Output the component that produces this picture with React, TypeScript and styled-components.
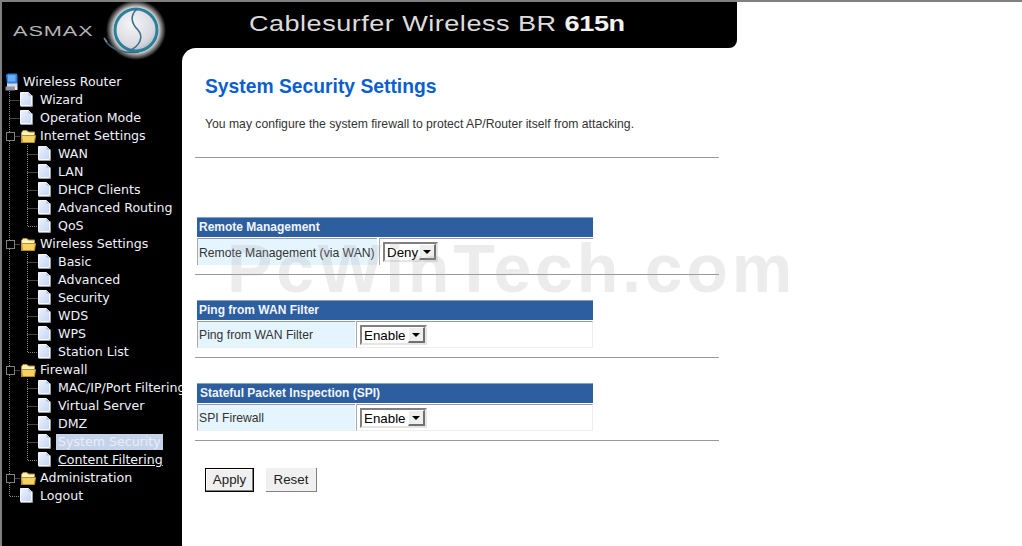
import React from "react";
import styled, { createGlobalStyle } from "styled-components";

const GlobalStyle = createGlobalStyle`
    html, body {
        margin: 0;
        padding: 0;
        background: #fff;
        overflow: hidden;
    }
`;

type Link = "line" | "join" | "last" | "plus" | "blank";
type Glyph = "page" | "folder";

interface TreeNode {
    label: string;
    glyph: Glyph;
    links: Link[];
    active?: boolean;
    underlined?: boolean;
}

const child = (label: string, last = false, extra = {}): TreeNode => ({
    label,
    glyph: "page",
    links: ["line", last ? "last" : "join"],
    ...extra,
});

const nodes: TreeNode[] = [
    { label: "Wizard", glyph: "page", links: ["join"] },
    { label: "Operation Mode", glyph: "page", links: ["join"] },
    { label: "Internet Settings", glyph: "folder", links: ["plus"] },
    child("WAN"),
    child("LAN"),
    child("DHCP Clients"),
    child("Advanced Routing"),
    child("QoS", true),
    { label: "Wireless Settings", glyph: "folder", links: ["plus"] },
    child("Basic"),
    child("Advanced"),
    child("Security"),
    child("WDS"),
    child("WPS"),
    child("Station List", true),
    { label: "Firewall", glyph: "folder", links: ["plus"] },
    child("MAC/IP/Port Filtering"),
    child("Virtual Server"),
    child("DMZ"),
    child("System Security", false, { active: true }),
    child("Content Filtering", true, { underlined: true }),
    { label: "Administration", glyph: "folder", links: ["plus"] },
    { label: "Logout", glyph: "page", links: ["last"] },
];

const LinkIcon: React.FC<{ kind: Link }> = ({ kind }) => (
    <svg width="18" height="18" viewBox="0 0 18 18" style={{ flex: "none" }}>
        {kind !== "blank" && (
            <path
                d={
                    kind === "last"
                        ? "M7.5 0V9.5H18"
                        : kind === "line"
                          ? "M7.5 0V18"
                          : "M7.5 0V18M7.5 9.5H18"
                }
                fill="none"
                stroke="#8a8a8a"
                strokeDasharray="1 1"
            />
        )}
        {kind === "plus" && <rect x="4.5" y="5.5" width="8" height="8" fill="#000" stroke="#808080" />}
    </svg>
);

const PageIcon = () => (
    <svg width="18" height="18" viewBox="0 0 18 18" style={{ flex: "none" }}>
        <defs>
            <linearGradient id="sheet" x1="0" y1="0" x2="1" y2="1">
                <stop offset="0" stopColor="#eef3ff" />
                <stop offset="1" stopColor="#c4d4f2" />
            </linearGradient>
        </defs>
        <path d="M0.5 1.5H8.5L11.5 4.5V14.5H0.5z" fill="url(#sheet)" stroke="#f6f8ff" />
        <path d="M8.5 1.5V4.5H11.5" fill="#aebbd6" />
        <path d="M12.5 4.5V15.5H0.5" fill="none" stroke="#9a9a9a" />
    </svg>
);

const FolderIcon = () => (
    <svg width="18" height="18" viewBox="0 0 18 18" style={{ flex: "none" }}>
        <path d="M1.5 16V5.5L3 3.5H7L8.5 5H14.5V7" fill="#fff0b0" stroke="#b88f20" />
        <path d="M2.5 6.5H14.5V8H2.5z" fill="#fff8dc" />
        <path d="M1.5 8.5H15.5L14.5 15.5H2.5z" fill="#f6d263" stroke="#b88f20" />
    </svg>
);

const ServerIcon = () => (
    <svg width="14" height="18" viewBox="0 0 14 18" style={{ flex: "none" }}>
        <path d="M1 2L3 0.5H11.5L12.5 2V11H2z" fill="#2f7fe6" />
        <path d="M3 2H10.5V8.5H3z" fill="#67aef5" />
        <path d="M2 10.5H12.5V14H2z" fill="#d7dae2" />
        <path d="M0.5 13.5H9.5V17.5H0.5z" fill="#8d93a3" />
        <path d="M9.5 14H12.5V17H9.5z" fill="#e9ecf2" />
    </svg>
);

const BrandMark = () => (
    <svg width="76" height="66" viewBox="0 0 76 66">
        <defs>
            <radialGradient id="halo">
                <stop offset="0.72" stopColor="#f4f4f4" />
                <stop offset="0.84" stopColor="#8a8a8a" />
                <stop offset="1" stopColor="#000" />
            </radialGradient>
            <radialGradient id="pearl" cx="0.4" cy="0.35" r="0.75">
                <stop offset="0" stopColor="#f6f6f8" />
                <stop offset="0.7" stopColor="#d8d9de" />
                <stop offset="1" stopColor="#a9adb5" />
            </radialGradient>
        </defs>
        <circle cx="41" cy="30" r="30" fill="url(#halo)" />
        <path d="M10 40C16 50 30 54 44 52" fill="none" stroke="#3b6274" strokeWidth="1.5" />
        <path d="M9 38L12 42" stroke="#7a8a9a" strokeWidth="1.5" />
        <circle cx="41" cy="30" r="21" fill="url(#pearl)" stroke="#2a7f9b" strokeWidth="3" />
        <path d="M42 9C34 16 37 24 43 30C49 37 45 46 34 51" fill="none" stroke="#3d6f8d" strokeWidth="1.6" />
    </svg>
);

const sections = [
    {
        title: "Remote Management",
        label: "Remote Management (via WAN)",
        value: "Deny",
        labelWidth: 180,
        selectWidth: 55,
        open: true,
        titleInset: 2,
    },
    {
        title: "Ping from WAN Filter",
        label: "Ping from WAN Filter",
        value: "Enable",
        labelWidth: 158,
        selectWidth: 67,
        titleInset: 2,
    },
    {
        title: "Stateful Packet Inspection (SPI)",
        label: "SPI Firewall",
        value: "Enable",
        labelWidth: 158,
        selectWidth: 67,
        titleInset: 3,
    },
];

export default function App() {
    return (
        <Page>
            <GlobalStyle />
            <Header>
                <Brand>ASMAX</Brand>
                <BrandLogo>
                    <BrandMark />
                </BrandLogo>
                <ProductName>
                    Cablesurfer Wireless BR <b>615n</b>
                </ProductName>
            </Header>
            <Body>
                <Sidebar>
                    <RootRow>
                        <ServerIcon />
                        <RootLabel>Wireless Router</RootLabel>
                    </RootRow>
                    {nodes.map(node => (
                        <Row key={node.label}>
                            {node.links.map((link, i) => (
                                <LinkIcon key={i} kind={link} />
                            ))}
                            {node.glyph === "page" ? <PageIcon /> : <FolderIcon />}
                            <NodeLabel $active={node.active} $underlined={node.underlined}>
                                {node.label}
                            </NodeLabel>
                        </Row>
                    ))}
                </Sidebar>
                <MainBack>
                    <Main>
                        <Title>System Security Settings</Title>
                        <Intro>You may configure the system firewall to protect AP/Router itself from attacking.</Intro>
                        <Rule />
                        <Sections>
                            {sections.map(section => (
                                <Section key={section.title}>
                                    <SectionTitle $inset={section.titleInset}>{section.title}</SectionTitle>
                                    <SectionRow>
                                        <FieldLabel $width={section.labelWidth} $open={section.open}>
                                            {section.label}
                                        </FieldLabel>
                                        <FieldValue $open={section.open}>
                                            <FakeSelect $width={section.selectWidth}>
                                                <span>{section.value}</span>
                                                <SelectArrow />
                                            </FakeSelect>
                                        </FieldValue>
                                    </SectionRow>
                                    <SectionRule />
                                </Section>
                            ))}
                        </Sections>
                        <Actions>
                            <ApplyButton>Apply</ApplyButton>
                            <ResetButton>Reset</ResetButton>
                        </Actions>
                        <Watermark>PcWinTech.com</Watermark>
                    </Main>
                </MainBack>
            </Body>
        </Page>
    );
}

const Page = styled.div`
    width: 1022px;
    height: 546px;
    box-sizing: border-box;
    border-top: 2px solid #808080;
    display: flex;
    flex-direction: column;
    background: #fff;
    overflow: hidden;
`;

const Header = styled.header`
    width: 737px;
    height: 46px;
    flex: none;
    box-sizing: border-box;
    padding-left: 11px;
    display: flex;
    background: #000;
    border-left: 2px solid #808080;
    border-bottom-right-radius: 8px;
`;

const Brand = styled.div`
    width: 80px;
    margin-top: 22px;
    font: 14px/14px "Liberation Sans", Arial, sans-serif;
    letter-spacing: 0.6px;
    color: #b4b4b4;
    transform: scaleX(1.55);
    transform-origin: left center;
`;

const BrandLogo = styled.div`
    position: relative;
    z-index: 1;
    height: 66px;
    margin-left: 2px;
    margin-top: -2px;
`;

const ProductName = styled.div`
    margin-left: 78px;
    margin-top: 9px;
    font: 22px/26px "Liberation Sans", Arial, sans-serif;
    letter-spacing: 0.4px;
    color: #dcdcdc;
    white-space: nowrap;
    transform: scaleX(1.23);
    transform-origin: left center;

    b {
        color: #f2f2f2;
        letter-spacing: -0.3px;
    }
`;

const Body = styled.div`
    flex: 1;
    min-height: 0;
    display: flex;
`;

const Sidebar = styled.nav`
    width: 182px;
    flex: none;
    box-sizing: border-box;
    padding-top: 25px;
    background: #000;
    border-left: 2px solid #808080;
    overflow: hidden;
`;

const Row = styled.div`
    height: 18px;
    display: flex;
    align-items: center;
    white-space: nowrap;
    font: 12.6px/16px "DejaVu Sans", Verdana, sans-serif;
    color: #eef2fa;
`;

const RootRow = styled(Row)`
    padding-left: 3px;
`;

const RootLabel = styled.span`
    margin-left: 4px;
`;

const NodeLabel = styled.span<{ $active?: boolean; $underlined?: boolean }>`
    margin-left: 2px;
    padding: 0;
    line-height: 16px;
    ${p => p.$underlined && "text-decoration: underline;"}
    ${p => p.$active && "background: #c4d3ea; color: #e9eef6; margin-left: 0; padding: 0 2px;"}
`;

const MainBack = styled.div`
    flex: 1;
    min-width: 0;
    background: #000;
`;

const Main = styled.main`
    position: relative;
    height: 100%;
    box-sizing: border-box;
    padding: 26px 0 0 13px;
    background: #fff;
    border-top-left-radius: 14px;
    font-family: "Liberation Sans", Arial, sans-serif;
`;

const Title = styled.h1`
    margin: 0 0 0 10px;
    font-size: 19.3px;
    line-height: 26px;
    font-weight: bold;
    color: #0a5fcf;
`;

const Intro = styled.p`
    margin: 17px 0 0 10px;
    font-size: 12.2px;
    line-height: 14px;
    color: #333;
`;

const Rule = styled.div`
    width: 524px;
    height: 1px;
    margin-top: 26px;
    background: #999;
`;

const Sections = styled.div`
    margin-top: 59px;
    display: flex;
    flex-direction: column;
    gap: 25px;
`;

const Section = styled.section`
    width: 524px;
`;

const SectionTitle = styled.div<{ $inset: number }>`
    width: 396px;
    height: 20px;
    box-sizing: border-box;
    margin-left: 2px;
    padding-left: ${p => p.$inset}px;
    border-top: 1px solid #8aa0bf;
    background: #2c5ea0;
    color: #f2f5fa;
    font-size: 12px;
    line-height: 19px;
    font-weight: bold;
`;

const SectionRow = styled.div`
    width: 396px;
    height: 27px;
    margin: 1px 0 0 2px;
    display: flex;
`;

const FieldLabel = styled.div<{ $width: number; $open?: boolean }>`
    width: ${p => p.$width}px;
    flex: none;
    box-sizing: border-box;
    padding-left: 1px;
    border-top: 1px solid #999;
    border-left: 1px solid #aaa;
    border-bottom: ${p => (p.$open ? "0" : "1px solid #eee")};
    background: #e4f5ff;
    color: #333;
    font-size: 12.2px;
    line-height: ${p => (p.$open ? 29 : 27)}px;
    white-space: nowrap;
`;

const FieldValue = styled.div<{ $open?: boolean }>`
    flex: 1;
    margin-left: ${p => (p.$open ? 2 : 1)}px;
    box-sizing: border-box;
    padding-left: 3px;
    padding-top: 3px;
    border-top: 1px solid #999;
    border-left: 1px solid #aaa;
    border-right: ${p => (p.$open ? "0" : "1px solid #eee")};
    border-bottom: ${p => (p.$open ? "0" : "1px solid #eee")};
`;

const FakeSelect = styled.div<{ $width: number }>`
    width: ${p => p.$width}px;
    height: 20px;
    display: flex;
    align-items: center;
    justify-content: space-between;
    box-sizing: border-box;
    padding: 0 0 0 2px;
    border: 2px solid;
    border-color: #808080 #e4e4e4 #e4e4e4 #808080;
    background: #fff;
    color: #000;
    font-size: 13.33px;
`;

const SelectArrow = styled.i`
    width: 17px;
    height: 16px;
    flex: none;
    box-sizing: border-box;
    display: flex;
    align-items: center;
    justify-content: center;
    background: #eee;
    border: 1px solid;
    border-color: #fff #707070 #707070 #fff;
    border-right-width: 2px;
    border-bottom-width: 2px;

    &::after {
        content: "";
        width: 0;
        height: 0;
        border-left: 4px solid transparent;
        border-right: 4px solid transparent;
        border-top: 4px solid #000;
    }
`;

const SectionRule = styled.div`
    height: 1px;
    margin-top: 9px;
    background: #999;
`;

const Actions = styled.div`
    display: flex;
    margin: 27px 0 0 10px;
    gap: 12px;
`;

const ApplyButton = styled.button`
    width: 49px;
    height: 24px;
    padding: 0 0 2px;
    box-sizing: border-box;
    border: 1px solid #000;
    box-shadow: inset -1px -1px 0 #808080, inset 1px 1px 0 #fff;
    background: #f0f0f0;
    color: #222;
    font: 13.33px "Liberation Sans", Arial, sans-serif;
`;

const ResetButton = styled(ApplyButton)`
    width: 51px;
    padding: 0 0 1px;
    border: 0;
    border-right: 1px solid #808080;
    border-bottom: 1px solid #808080;
    box-shadow: none;
`;

const Watermark = styled.div`
    position: absolute;
    left: 45px;
    top: 180px;
    font-size: 68px;
    line-height: 80px;
    font-weight: bold;
    letter-spacing: 3.8px;
    color: rgba(170, 170, 170, 0.22);
    white-space: nowrap;
    pointer-events: none;
`;
